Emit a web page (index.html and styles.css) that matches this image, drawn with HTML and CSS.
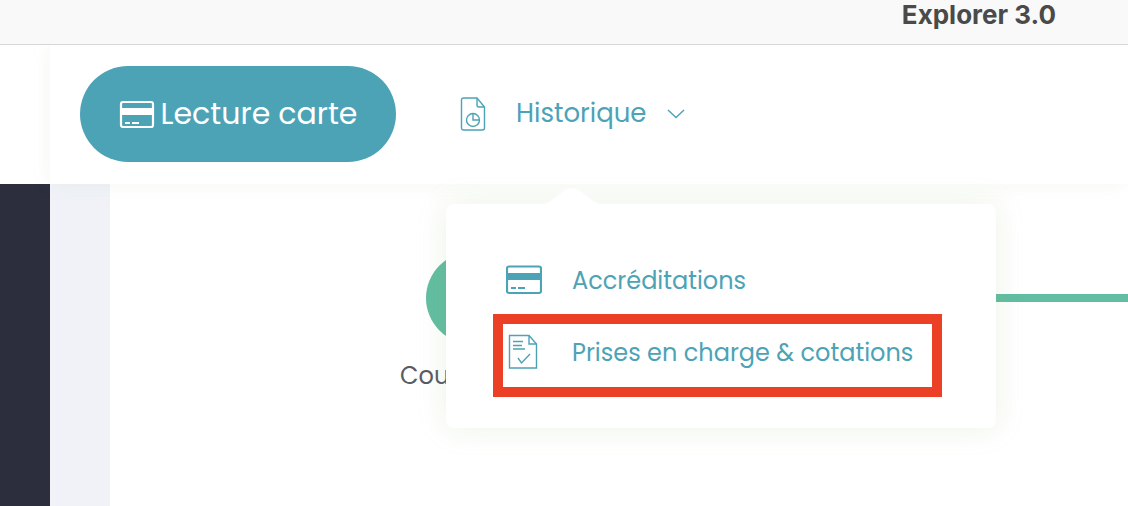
FILE: index.html
```
<!DOCTYPE html>
<html lang="fr">
<head>
    <meta charset="UTF-8">
    <meta name="viewport" content="width=device-width, initial-scale=1">
    <title>Explorer 3.0</title>
    <link rel="stylesheet" href="styles.css">
</head>
<body>

<div class="titlebar">Explorer 3.0</div>

<header class="header">
    <nav class="nav">
        <button type="button" class="btn-card">
            <svg class="icon-card" width="36" height="30" viewBox="0 0 36 30">
                <rect x="2" y="3" width="32" height="25" rx="2" fill="none" stroke="currentColor" stroke-width="2.200"/>
                <path d="M2 9h32v7H2z" fill="currentColor"/>
                <path d="M6 24h5M13 24h7" fill="none" stroke="currentColor" stroke-width="2"/>
            </svg>
            Lecture carte
        </button>

        <div class="nav-item">
            <button type="button" class="nav-link" aria-expanded="true">
                <svg width="26" height="34" viewBox="0 0 26 34" fill="none" stroke="currentColor" stroke-width="1.4">
                    <path d="M3.500 1H17l7.500 9v21a2 2 0 0 1-2 2h-19a2 2 0 0 1-2-2V3a2 2 0 0 1 2-2z"/>
                    <path d="M17 1v7a2 2 0 0 0 2 2h5.500"/>
                    <circle cx="13" cy="23" r="6.500"/>
                    <path d="M13 16.500V23h6.500"/>
                </svg>
                <span class="nav-label">Historique</span>
                <svg width="18" height="10" viewBox="0 0 18 10" fill="none" stroke="currentColor" stroke-width="1.400">
                    <path d="M1 1l8 7.500L17 1"/>
                </svg>
            </button>

            <!-- Sous-menu -->
            <div class="menu">
                <svg class="menu-arrow" width="64" height="18" viewBox="0 0 64 18">
                    <path d="M0 18C14 16 22 1 32 1s18 15 32 17z" fill="#fff"/>
                </svg>
                <a href="#" class="menu-item">
                    <svg width="36" height="30" viewBox="0 0 36 30">
                        <rect x="1" y="1.500" width="34" height="26.500" rx="2" fill="none" stroke="currentColor" stroke-width="2.200"/>
                        <path d="M1 8h34v7H1z" fill="currentColor"/>
                        <path d="M5 23h5M12 23h7" fill="none" stroke="currentColor" stroke-width="2"/>
                    </svg>
                    Accréditations
                </a>
                <a href="#" class="menu-item highlight">
                    <svg width="36" height="36" viewBox="0 0 36 36" fill="none" stroke="currentColor" stroke-width="1.400">
                        <path d="M3.500 1.500H23l7.500 8.500v24h-27z"/>
                        <path d="M23 1.500V10h7.500"/>
                        <path d="M7 7.500h10M7 11.500h9M7 15h12"/>
                        <path d="M12 24l3.500 5 8.500-9"/>
                    </svg>
                    Prises en charge &amp; cotations
                </a>
            </div>
        </div>
    </nav>
</header>

<div class="layout">
    <aside class="sidebar"></aside>
    <main class="content">
        <div class="stepper">
            <div class="step">
                <span class="step-dot"></span>
                <span class="step-label">Cou</span>
            </div>
            <div class="step-line"></div>
        </div>
    </main>
</div>

</body>
</html>
```
FILE: styles.css
```
* {
    box-sizing: border-box;
}

body {
    margin: 0;
    min-height: 100vh;
    display: flex;
    flex-direction: column;
    overflow: hidden;
    background-color: #fff;
    font-family: Poppins, Inter, sans-serif;
    font-size: 24px;
    color: #4ca3b6;
}

button {
    font-family: inherit;
    color: inherit;
    border: none;
    background: none;
    padding: 0;
    cursor: pointer;
}

svg {
    flex-shrink: 0;
}

.titlebar {
    height: 45px;
    padding-right: 72px;
    border-bottom: 1px solid #d6d6d6;
    background-color: #f9f9f9;
    color: #4a4a4a;
    font-family: Inter, sans-serif;
    font-size: 26px;
    font-weight: 700;
    line-height: 30px;
    text-align: right;
}

/* Barre de navigation */
.header {
    position: relative;
    z-index: 2;
    padding-left: 50px;
    background-color: #fff;
    clip-path: inset(0 0 -400px 0);
}

.nav {
    display: flex;
    gap: 50px;
    height: 139px;
    padding: 0 30px 2px;
    background-color: #fff;
    box-shadow: 0 0 20px rgba(120, 170, 80, 0.08);
}

.btn-card {
    display: flex;
    align-items: center;
    justify-content: center;
    gap: 6px;
    align-self: center;
    width: 316px;
    height: 96px;
    border-radius: 48px;
    background-color: #4ca3b6;
    color: #fff;
    font-size: 30px;
    font-weight: 400;
}

.nav-item {
    position: relative;
    display: flex;
}

.nav-link {
    display: flex;
    align-items: center;
    padding-left: 14px;
    font-size: 26px;
}

.nav-label {
    margin: 0 20px 0 30px;
}

.menu {
    position: absolute;
    top: calc(100% + 22px);
    left: 0;
    width: 550px;
    padding: 40px 60px;
    border-radius: 8px;
    background-color: #fff;
    box-shadow: 0 0 30px rgba(120, 170, 80, 0.14);
}

.menu-arrow {
    position: absolute;
    top: -17px;
    left: 94px;
}

.menu-item {
    position: relative;
    display: flex;
    align-items: center;
    gap: 30px;
    height: 72px;
    color: inherit;
    text-decoration: none;
    white-space: nowrap;
}

.highlight::after {
    content: "";
    position: absolute;
    inset: -2px -6px -9px -13px;
    border: 10px solid #eb4026;
}

/* Contenu */
.layout {
    flex: 1;
    display: flex;
}

.sidebar {
    width: 110px;
    border-left: 50px solid #2c2e3e;
    background-color: #f0f2f8;
}

.content {
    flex: 1;
    padding: 68px 0 0 290px;
}

.stepper {
    display: flex;
}

.step {
    width: 144px;
    display: flex;
    flex-direction: column;
    gap: 16px;
}

.step-dot {
    width: 92px;
    height: 92px;
    margin: 0 auto;
    border-radius: 50%;
    background-color: #62bda2;
}

.step-label {
    color: #595b64;
    line-height: 32px;
}

.step-line {
    flex: 1;
    height: 8px;
    margin-top: 42px;
    background-color: #62bda2;
}
```
